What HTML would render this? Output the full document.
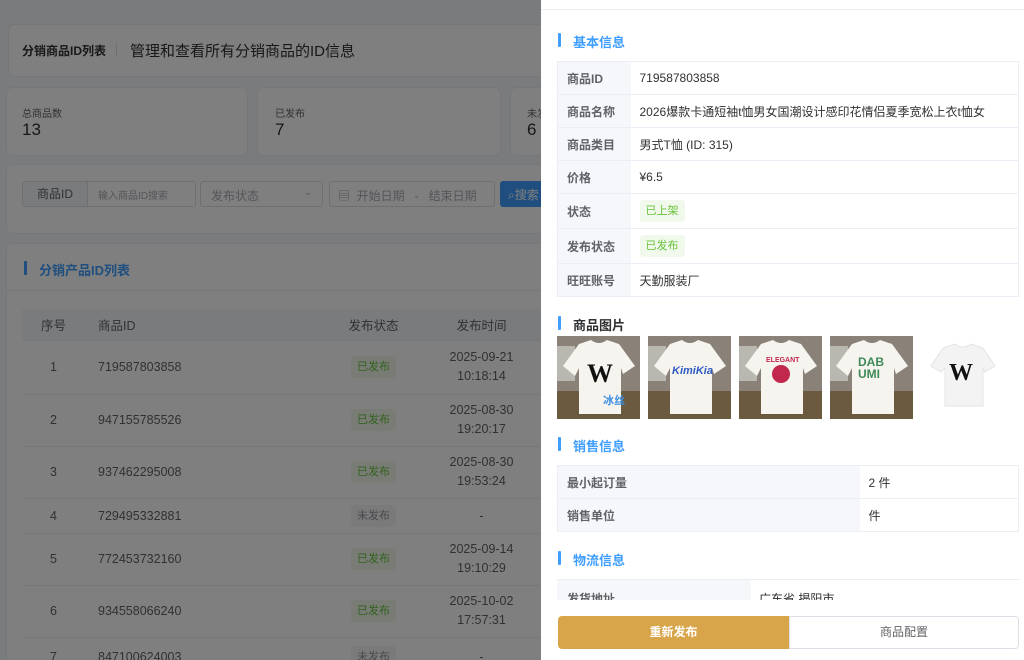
<!DOCTYPE html>
<html style="width:1024px;height:660px;overflow:hidden"><head><meta charset="utf-8">
<style>
*{box-sizing:border-box;margin:0;padding:0}
body{width:1024px;height:660px;overflow:hidden;position:relative;background:#f5f6f8;font-family:"Liberation Sans","Noto Sans CJK SC",sans-serif;color:#303133}
.a{position:absolute}
.card{position:absolute;background:#fff;border:1px solid #ebeef5;border-radius:6px}
.mask{position:absolute;left:0;top:0;width:1024px;height:660px;background:rgba(0,0,0,0.5)}
.drawer{position:absolute;left:541px;top:0;width:483px;height:660px;background:#fff;overflow:hidden}
.sec{position:absolute;left:17px;font-size:13px;font-weight:bold;color:#409eff;padding-left:15px}
.sec:before{content:"";position:absolute;left:0;top:1px;width:3px;height:14px;background:#409eff;border-radius:1px}
table{border-collapse:collapse;font-size:12px}
.dt{position:absolute;left:16px;width:462px;border:1px solid #ebeef5}
.dt td{border-bottom:1px solid #ebeef5;padding:0 9px;height:33px}
.dt td.l{background:#f5f7fa;color:#606266;font-weight:bold}
.tag{display:inline-block;padding:0 6px;height:22px;line-height:22px;font-size:11px;background:#f0f9eb;color:#67c23a;border-radius:3px}
.tg{background:#f4f4f5;color:#909399}
.lt td{border-bottom:1px solid #ebeef5;font-size:12.5px;color:#606266}
</style></head><body>
<div class="card" style="left:8px;top:24px;width:540px;height:53px"></div>
<div class="a" style="left:22px;top:42px;font-size:12px;font-weight:bold;color:#303133">分销商品ID列表</div>
<div class="a" style="left:116px;top:43px;width:1px;height:14px;background:#dcdfe6"></div>
<div class="a" style="left:130px;top:40px;font-size:15px;color:#303133">管理和查看所有分销商品的ID信息</div>
<div class="card" style="left:6px;top:87px;width:242px;height:69px"></div>
<div class="a" style="left:22px;top:105px;font-size:10px;color:#606266">总商品数</div>
<div class="a" style="left:22px;top:120px;font-size:17px">13</div>
<div class="card" style="left:257px;top:87px;width:244px;height:69px"></div>
<div class="a" style="left:275px;top:105px;font-size:10px;color:#606266">已发布</div>
<div class="a" style="left:275px;top:120px;font-size:17px">7</div>
<div class="card" style="left:510px;top:87px;width:100px;height:69px"></div>
<div class="a" style="left:527px;top:105px;font-size:10px;color:#606266">未发布</div>
<div class="a" style="left:527px;top:120px;font-size:17px">6</div>
<div class="card" style="left:6px;top:164px;width:560px;height:70px"></div>
<div class="a" style="left:22px;top:181px;width:174px;height:26px;border:1px solid #dcdfe6;border-radius:3px;background:#fff"></div>
<div class="a" style="left:22px;top:181px;width:66px;height:26px;background:#f5f7fa;border:1px solid #dcdfe6;border-radius:3px 0 0 3px;font-size:12px;color:#606266;text-align:center;line-height:24px">商品ID</div>
<div class="a" style="left:98px;top:187px;font-size:10px;color:#a8abb2">输入商品ID搜索</div>
<div class="a" style="left:200px;top:181px;width:123px;height:26px;border:1px solid #dcdfe6;border-radius:3px;background:#fff;font-size:12px;color:#a8abb2;padding:5px 10px">发布状态<span style="float:right;font-size:9px">⌄</span></div>
<div class="a" style="left:329px;top:181px;width:166px;height:26px;border:1px solid #dcdfe6;border-radius:3px;background:#fff;font-size:12px;color:#a8abb2;padding:5px 8px">▤&nbsp;&nbsp;开始日期&nbsp;&nbsp;&nbsp;-&nbsp;&nbsp;&nbsp;结束日期</div>
<div class="a" style="left:500px;top:181px;width:60px;height:26px;background:#409eff;border-radius:3px;color:#fff;font-size:12px;padding:5px 8px">⌕搜索</div>
<div class="card" style="left:6px;top:243px;width:560px;height:417px;border-bottom:none;border-radius:6px 6px 0 0"></div>
<div class="sec" style="left:24px;top:260px">分销产品ID列表</div>
<div class="a" style="left:7px;top:290px;width:540px;height:1px;background:#ebeef5"></div>
<div class="a" style="left:22px;top:309px;width:525px;height:351px;overflow:hidden">
<table class="lt" style="width:520px">
<tr style="height:31px;background:#f5f7fa;color:#606266"><td style="width:63px;text-align:center">序号</td><td style="width:241px;padding-left:13px">商品ID</td><td style="width:95px;text-align:center">发布状态</td><td style="text-align:center">发布时间</td></tr>
<tr style="height:54px"><td align="center">1</td><td style="padding-left:13px">719587803858</td><td align="center"><span class="tag">已发布</span></td><td align="center" style="line-height:19px">2025-09-21<br>10:18:14</td></tr>
<tr style="height:52px"><td align="center">2</td><td style="padding-left:13px">947155785526</td><td align="center"><span class="tag">已发布</span></td><td align="center" style="line-height:19px">2025-08-30<br>19:20:17</td></tr>
<tr style="height:52px"><td align="center">3</td><td style="padding-left:13px">937462295008</td><td align="center"><span class="tag">已发布</span></td><td align="center" style="line-height:19px">2025-08-30<br>19:53:24</td></tr>
<tr style="height:35px"><td align="center">4</td><td style="padding-left:13px">729495332881</td><td align="center"><span class="tag tg">未发布</span></td><td align="center">-</td></tr>
<tr style="height:52px"><td align="center">5</td><td style="padding-left:13px">772453732160</td><td align="center"><span class="tag">已发布</span></td><td align="center" style="line-height:19px">2025-09-14<br>19:10:29</td></tr>
<tr style="height:52px"><td align="center">6</td><td style="padding-left:13px">934558066240</td><td align="center"><span class="tag">已发布</span></td><td align="center" style="line-height:19px">2025-10-02<br>17:57:31</td></tr>
<tr style="height:40px"><td align="center">7</td><td style="padding-left:13px">847100624003</td><td align="center"><span class="tag tg">未发布</span></td><td align="center">-</td></tr>
</table></div>
<div class="mask"></div>
<div class="drawer">
<div class="a" style="left:0;top:9px;width:483px;height:1px;background:#ebeef5"></div>
<div class="sec" style="top:32px">基本信息</div>
<table class="dt" style="top:61px">
<tr><td class="l" style="width:73px">商品ID</td><td>719587803858</td></tr>
<tr><td class="l">商品名称</td><td>2026爆款卡通短袖t恤男女国潮设计感印花情侣夏季宽松上衣t恤女</td></tr>
<tr><td class="l">商品类目</td><td>男式T恤 (ID: 315)</td></tr>
<tr><td class="l">价格</td><td>¥6.5</td></tr>
<tr style="height:35px"><td class="l">状态</td><td><span class="tag">已上架</span></td></tr>
<tr style="height:35px"><td class="l">发布状态</td><td><span class="tag">已发布</span></td></tr>
<tr style="height:33px"><td class="l">旺旺账号</td><td>天勤服装厂</td></tr>
</table>
<div class="sec" style="top:315px;color:#303133">商品图片</div>
<svg class="a" style="left:16px;top:336px" width="460" height="83">
<defs><g id="t"><rect width="83" height="83" fill="#8a8278"/><rect y="55" width="83" height="28" fill="#6b5a40"/><rect x="0" y="10" width="18" height="35" fill="#b8b8b0"/><path d="M22 8 L34 4 Q42 10 50 4 L62 8 L78 30 L66 38 L64 32 L64 78 L22 78 L22 32 L18 40 L6 30 Z" fill="#f6f4ef"/></g></defs>
<use href="#t"/><text x="30" y="46" font-size="26" font-weight="bold" font-family="Liberation Serif" fill="#111">W</text><text x="46" y="68" font-size="11" font-weight="bold" fill="#3b8ee0">冰丝</text>
<g transform="translate(91,0)"><use href="#t"/><text x="24" y="38" font-size="11" font-weight="bold" font-style="italic" fill="#2f5cc0">KimiKia</text></g>
<g transform="translate(182,0)"><use href="#t"/><text x="27" y="26" font-size="7" font-weight="bold" fill="#c2274d">ELEGANT</text><circle cx="42" cy="38" r="9" fill="#c2274d"/></g>
<g transform="translate(273,0)"><use href="#t"/><text x="28" y="30" font-size="12" font-weight="bold" fill="#3e8a58">DAB</text><text x="28" y="42" font-size="12" font-weight="bold" fill="#3e8a58">UMI</text></g>
<g transform="translate(364,0)"><rect width="83" height="83" fill="#fff"/><path d="M22 12 L34 8 Q42 14 50 8 L62 12 L74 30 L64 36 L62 32 L62 70 L24 70 L24 32 L20 36 L10 30 Z" fill="#f3f3f3" stroke="#e4e4e4"/><text x="28" y="44" font-size="24" font-weight="bold" font-family="Liberation Serif" fill="#111">W</text></g>
</svg>
<div class="sec" style="top:436px">销售信息</div>
<table class="dt" style="top:465px">
<tr><td class="l" style="width:302px">最小起订量</td><td>2 件</td></tr>
<tr><td class="l">销售单位</td><td>件</td></tr>
</table>
<div class="sec" style="top:550px">物流信息</div>
<div class="a" style="left:16px;top:579px;width:462px;height:21px;overflow:hidden;border-top:1px solid #ebeef5">
<div class="a" style="left:0;top:0;width:194px;height:33px;background:#f5f7fa;font-size:12px;font-weight:bold;color:#606266;padding:10px 10px">发货地址</div>
<div class="a" style="left:202px;top:10px;font-size:12px">广东省 揭阳市</div>
</div>
<div class="a" style="left:17px;top:616px;width:231px;height:33px;background:#d9a54a;border-radius:4px 0 0 4px;color:#fff;font-size:12px;font-weight:bold;text-align:center;line-height:33px">重新发布</div>
<div class="a" style="left:248px;top:616px;width:230px;height:33px;border:1px solid #dcdfe6;border-radius:0 4px 4px 0;color:#606266;font-size:12px;text-align:center;line-height:31px">商品配置</div>
</div>
</body></html>
